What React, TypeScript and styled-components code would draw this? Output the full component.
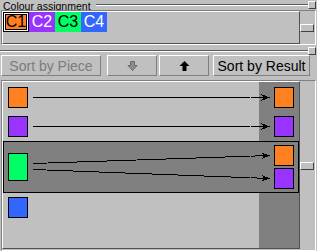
import React from "react";
import styled, { createGlobalStyle } from "styled-components";

const GlobalStyle = createGlobalStyle`
  html, body {
    margin: 0;
    padding: 0;
    background: #c0c0c0;
  }
  body {
    font-family: "Liberation Sans", Arial, sans-serif;
  }
`;

const palette = {
  bg: "#c0c0c0",
  dark: "#808080",
  shade: "#505050",
  orange: "#ff8020",
  purple: "#9933ff",
  green: "#00ff66",
  blue: "#3366ff",
};

const swatches = [
  { label: "C1", bg: palette.orange, fg: "#000", selected: true },
  { label: "C2", bg: palette.purple, fg: "#fff" },
  { label: "C3", bg: palette.green, fg: "#000" },
  { label: "C4", bg: palette.blue, fg: "#fff" },
];

// which piece points at which result
const rows = [
  { colour: palette.orange, targets: [palette.orange], lines: [[5, 10.5, 242, 10.5]] },
  { colour: palette.purple, targets: [palette.purple], lines: [[5, 10.5, 242, 10.5]] },
  {
    colour: palette.green,
    selected: true,
    targets: [palette.orange, palette.purple],
    lines: [
      [5, 21.5, 242, 13.5],
      [5, 27.5, 242, 36.5],
    ],
  },
  { colour: palette.blue, targets: [], lines: [] },
];

function Arrow({ line }: { line: number[] }) {
  const [x1, y1, x2, y2] = line;
  const angle = (Math.atan2(y2 - y1, x2 - x1) * 180) / Math.PI;
  const gapX = 222;
  const at = (x: number) => y1 + ((y2 - y1) * (x - x1)) / (x2 - x1);
  return (
    <g>
      <line x1={x1} y1={y1} x2={gapX} y2={at(gapX)} />
      <line x1={gapX + 1} y1={at(gapX + 1)} x2={x2 - 5} y2={at(x2 - 5)} />
      <polygon
        stroke="none"
        fill="#000"
        transform={`translate(${x2} ${y2}) rotate(${angle})`}
        points="0,0 -9,-3.5 -6,0 -9,3.5"
      />
    </g>
  );
}

export default function App() {
  return (
    <>
      <GlobalStyle />
      <Window>
        <TitleRow>
          <TitleText>Colour assignment</TitleText>
          <Etch />
          <Handle />
        </TitleRow>

        <ColourFrame>
          <ColourArea>
            {swatches.map((s) => (
              <Swatch key={s.label} $bg={s.bg} $fg={s.fg} $selected={s.selected}>
                {s.label}
              </Swatch>
            ))}
          </ColourArea>
          <ScrollColumn>
            <Thumb $offset={13} />
          </ScrollColumn>
        </ColourFrame>

        <Divider>
          <Etch $top={5} $left={0} />
          <Handle $top={2} />
        </Divider>

        <ButtonRow>
          <Button $width={100} disabled>
            Sort by Piece
          </Button>
          <Button $width={50} $gap={6} disabled>
            <svg width="11" height="10" viewBox="0 0 11 10">
              <path
                d="M3.5 0.5 H7.5 V4.5 H10 L5.5 9.5 L1 4.5 H3.5 Z"
                fill="#8c8c8c"
                stroke="#6a6a6a"
              />
            </svg>
          </Button>
          <Button $width={50} $gap={2}>
            <svg width="11" height="10" viewBox="0 0 11 10">
              <path d="M5.5 0 L10.5 5 H7.5 V10 H3.5 V5 H0.5 Z" fill="#000" />
            </svg>
          </Button>
          <Button $width={97} $gap={4}>
            Sort by Result
          </Button>
        </ButtonRow>

        <ListFrame>
          <ListArea>
            {rows.map((r, idx) => (
              <Row key={idx} $selected={r.selected}>
                <Piece $bg={r.colour} $tall={r.selected} />
                {r.targets.length > 0 && (
                  <>
                    <Links
                      width="246"
                      height={r.selected ? 50 : 21}
                      stroke="#000"
                      strokeWidth="1"
                      shapeRendering="crispEdges"
                    >
                      {r.lines.map((l, i) => (
                        <Arrow key={i} line={l} />
                      ))}
                    </Links>
                    <Targets>
                      {r.targets.map((t, i) => (
                        <Piece key={i} $bg={t} />
                      ))}
                    </Targets>
                  </>
                )}
              </Row>
            ))}
          </ListArea>
          <ScrollColumn>
            <Thumb $offset={81} />
          </ScrollColumn>
        </ListFrame>
      </Window>
    </>
  );
}

const Window = styled.div`
  width: 317px;
  height: 251px;
  background: ${palette.bg};
  overflow: hidden;
  display: flex;
  flex-direction: column;
`;

const TitleRow = styled.div`
  height: 10px;
  display: flex;
  align-items: flex-start;
  padding-left: 3px;
`;

const TitleText = styled.div`
  font-size: 10.5px;
  line-height: 12px;
  color: #000;
  white-space: nowrap;
`;

const Etch = styled.div<{ $top?: number; $left?: number }>`
  flex: 1;
  height: 2px;
  box-sizing: border-box;
  margin-top: ${(p) => p.$top ?? 4}px;
  margin-left: ${(p) => p.$left ?? 5}px;
  border-top: 1px solid #5a5a5a;
  border-bottom: 1px solid #ffffff;
`;

const Handle = styled.div<{ $top?: number }>`
  width: 8px;
  height: 8px;
  box-sizing: border-box;
  margin-top: ${(p) => p.$top ?? 1}px;
  margin-right: 1px;
  background: ${palette.bg};
  border: 1px solid;
  border-color: #ffffff #404040 #404040 #ffffff;
`;

const ColourFrame = styled.div`
  width: 315px;
  height: 35px;
  margin-left: 1px;
  box-sizing: border-box;
  display: flex;
  border: 1px solid;
  border-color: ${palette.dark} #ffffff #ffffff ${palette.dark};
`;

const ColourArea = styled.div`
  width: 298px;
  box-sizing: border-box;
  display: flex;
  align-items: flex-start;
  border: 1px solid;
  border-color: #ffffff ${palette.shade} ${palette.shade} #ffffff;
`;

const Swatch = styled.div<{ $bg: string; $fg: string; $selected?: boolean }>`
  width: 26px;
  height: 20px;
  box-sizing: border-box;
  display: flex;
  align-items: center;
  justify-content: center;
  background: ${(p) => p.$bg};
  color: ${(p) => p.$fg};
  font-family: "Liberation Sans Narrow", "Liberation Sans", Arial, sans-serif;
  font-size: 16px;
  line-height: 1;
  border: ${(p) => (p.$selected ? "1px solid #000" : "none")};
  box-shadow: ${(p) =>
    p.$selected ? "inset 0 0 0 1px #fff, inset 0 0 0 2px #000" : "none"};
`;

const ScrollColumn = styled.div`
  width: 15px;
  display: flex;
  flex-direction: column;
`;

const Thumb = styled.div<{ $offset: number }>`
  width: 14px;
  height: 8px;
  box-sizing: border-box;
  margin-top: ${(p) => p.$offset}px;
  background: ${palette.bg};
  border: 1px solid;
  border-color: #ffffff #404040 #404040 #ffffff;
`;

const Divider = styled.div`
  height: 10px;
  display: flex;
  align-items: flex-start;
`;

const ButtonRow = styled.div`
  height: 21px;
  display: flex;
  padding-left: 1px;
  margin-bottom: 4px;
`;

const Button = styled.button<{ $width: number; $gap?: number }>`
  width: ${(p) => p.$width}px;
  height: 21px;
  margin: 0 0 0 ${(p) => p.$gap ?? 0}px;
  padding: 0;
  box-sizing: border-box;
  display: flex;
  align-items: center;
  justify-content: center;
  background: ${palette.bg};
  border: 1px solid;
  border-color: #ffffff ${palette.dark} ${palette.dark} #ffffff;
  border-radius: 0;
  font-family: "Liberation Sans", Arial, sans-serif;
  font-size: 14px;
  color: #000;
  white-space: nowrap;

  &:disabled {
    color: #7c7c7c;
  }
`;

const ListFrame = styled.div`
  width: 315px;
  height: 171px;
  margin-left: 1px;
  box-sizing: border-box;
  display: flex;
  padding-bottom: 1px;
  border: 1px solid;
  border-color: ${palette.dark} #ffffff #ffffff ${palette.dark};
`;

const ListArea = styled.div`
  width: 298px;
  box-sizing: border-box;
  display: flex;
  flex-direction: column;
  border: 1px solid;
  border-color: #ffffff ${palette.shade} ${palette.shade} #ffffff;
  background: linear-gradient(
    to right,
    ${palette.bg} 256px,
    ${palette.dark} 256px
  );
`;

const Row = styled.div<{ $selected?: boolean }>`
  display: flex;
  align-items: ${(p) => (p.$selected ? "center" : "flex-start")};
  box-sizing: border-box;
  ${(p) =>
    p.$selected
      ? `
    height: 52px;
    margin-top: 1px;
    padding: 0 4px;
    border: 1px solid #000;
    background: ${palette.dark};
  `
      : `
    padding: 5px 5px 3px 5px;
  `}

  &:last-child {
    padding-top: 4px;
  }
`;

const Piece = styled.div<{ $bg: string; $tall?: boolean }>`
  width: 20px;
  height: ${(p) => (p.$tall ? 28 : 21)}px;
  box-sizing: border-box;
  flex-shrink: 0;
  background: ${(p) => p.$bg};
  border: 1px solid #000;
`;

const Links = styled.svg`
  display: block;
  flex-shrink: 0;
`;

const Targets = styled.div`
  display: flex;
  flex-direction: column;
  gap: 2px;
`;
